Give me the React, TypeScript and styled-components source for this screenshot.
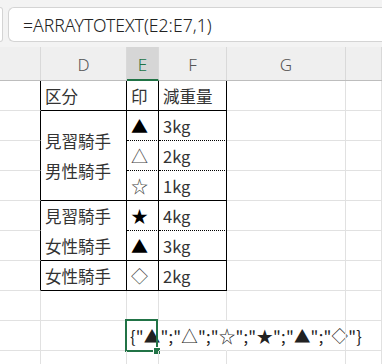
import React from 'react';
import styled, { createGlobalStyle } from 'styled-components';

const GlobalStyle = createGlobalStyle`
  html, body {
    margin: 0;
    padding: 0;
    background: #fff;
  }
  body {
    width: 382px;
    height: 364px;
    overflow: hidden;
    font-family: 'Noto Sans CJK JP', 'Noto Sans', sans-serif;
  }
`;

type Line = 'grid' | 'solid' | 'dotted' | 'none';

const line = (l: Line) =>
	l === 'solid'
		? '1px solid #000'
		: l === 'dotted'
		? '1px dotted #000'
		: l === 'none'
		? '1px solid transparent'
		: '1px solid #e1e1e1';

const COLS = '41px 86px 32px 68px 119px 1fr';

const FormulaBar = styled.div`
	height: 47px;
	box-sizing: border-box;
	background: #f3f3f3;
	padding: 7px 0 5px 0;
	display: flex;
	align-items: stretch;
	gap: 5px;
`;

const NameStub = styled.div`
	width: 2px;
	border: 1px solid #d4d4d4;
	border-left: none;
	border-radius: 0 6px 6px 0;
	background: #fff;
`;

const FormulaBox = styled.div`
	flex: 1;
	background: #fff;
	border: 1px solid #d4d4d4;
	border-right: none;
	border-radius: 6px 0 0 6px;
	display: flex;
	align-items: center;
	padding-left: 14px;
	font-family: 'Noto Sans', 'Liberation Sans', sans-serif;
	font-size: 17.6px;
	font-weight: 300;
	color: #222;
`;

const HeaderRow = styled.div`
	display: grid;
	grid-template-columns: ${COLS};
	height: 34px;
	box-sizing: border-box;
	background: #efefef;
	border-bottom: 1px solid #bdbdbd;
`;

const ColHead = styled.div<{ $active?: boolean }>`
	display: flex;
	align-items: center;
	justify-content: center;
	box-sizing: border-box;
	border-right: 1px solid #d9d9d9;
	font-family: 'Noto Sans', 'Liberation Sans', sans-serif;
	font-size: 17px;
	font-weight: 300;
	color: ${p => (p.$active ? '#217346' : '#555')};
	background: ${p => (p.$active ? '#d6d6d6' : 'transparent')};
	border-bottom: ${p => (p.$active ? '2px solid #217346' : 'none')};
	margin-bottom: ${p => (p.$active ? '-1px' : '0')};
	padding-top: 2px;
`;

const Sheet = styled.div`
	display: grid;
	grid-template-columns: ${COLS};
	grid-auto-rows: 30px;
`;

const Cell = styled.div<{ $r?: Line; $b?: Line; $span?: number }>`
	position: relative;
	box-sizing: border-box;
	border-right: ${p => line(p.$r ?? 'grid')};
	border-bottom: ${p => line(p.$b ?? 'grid')};
	grid-row: ${p => (p.$span ? `span ${p.$span}` : 'auto')};
	display: flex;
	flex-direction: column;
	justify-content: center;
	padding: 1px 0 0 4px;
	font-size: 16.5px;
	line-height: 30px;
	color: #333;
	white-space: nowrap;
`;

const Mark = styled.span<{ $solid?: boolean }>`
	font-size: 17px;
	color: ${p => (p.$solid ? '#000' : '#444')};
`;

const Overflow = styled.span`
	font-size: 16.5px;
	color: #222;
	letter-spacing: 0.2px;
	margin-left: -1px;
`;

const Selection = styled.div`
	position: absolute;
	left: -2px;
	top: -2px;
	width: 33px;
	height: 33px;
	border: 2px solid #217346;
	box-sizing: border-box;
	pointer-events: none;
`;

const FillHandle = styled.div`
	position: absolute;
	right: -5px;
	bottom: -5px;
	width: 6px;
	height: 6px;
	background: #217346;
	border: 1px solid #fff;
`;

type Row = { e: string; solid?: boolean; f: string; b: Line };

const group1: Row[] = [
	{ e: '▲', solid: true, f: '3kg', b: 'dotted' },
	{ e: '△', f: '2kg', b: 'dotted' },
	{ e: '☆', f: '1kg', b: 'solid' },
];

const group2: Row[] = [
	{ e: '★', solid: true, f: '4kg', b: 'dotted' },
	{ e: '▲', solid: true, f: '3kg', b: 'solid' },
];

function Blank() {
	return (
		<>
			<Cell />
			<Cell />
		</>
	);
}

function GroupRows({ rows, label }: { rows: Row[]; label: string[] }) {
	return (
		<>
			{rows.map((r, i) => (
				<React.Fragment key={i}>
					<Cell $r='solid' />
					{i === 0 && (
						<Cell $r='solid' $b='solid' $span={rows.length}>
							{label.map(l => (
								<div key={l}>{l}</div>
							))}
						</Cell>
					)}
					<Cell $r='solid' $b={r.b}>
						<Mark $solid={r.solid}>{r.e}</Mark>
					</Cell>
					<Cell $r='solid' $b={r.b}>
						{r.f}
					</Cell>
					<Blank />
				</React.Fragment>
			))}
		</>
	);
}

export default function App() {
	return (
		<>
			<GlobalStyle />
			<FormulaBar>
				<NameStub />
				<FormulaBox>=ARRAYTOTEXT(E2:E7,1)</FormulaBox>
			</FormulaBar>
			<HeaderRow>
				<ColHead />
				<ColHead>D</ColHead>
				<ColHead $active>E</ColHead>
				<ColHead>F</ColHead>
				<ColHead>G</ColHead>
				<ColHead />
			</HeaderRow>
			<Sheet>
				<Cell $r='solid' />
				<Cell $r='solid' $b='solid'>区分</Cell>
				<Cell $r='solid' $b='solid'>印</Cell>
				<Cell $r='solid' $b='solid'>減重量</Cell>
				<Blank />

				<GroupRows rows={group1} label={['見習騎手', '男性騎手']} />
				<GroupRows rows={group2} label={['見習騎手', '女性騎手']} />

				<Cell $r='solid' />
				<Cell $r='solid' $b='solid'>女性騎手</Cell>
				<Cell $r='solid' $b='solid'>
					<Mark>◇</Mark>
				</Cell>
				<Cell $r='solid' $b='solid'>2kg</Cell>
				<Blank />

				<Cell />
				<Cell />
				<Cell />
				<Cell />
				<Blank />

				<Cell />
				<Cell />
				<Cell $r='none'>
					<Overflow>{'{"▲";"△";"☆";"★";"▲";"◇"}'}</Overflow>
					<Selection>
						<FillHandle />
					</Selection>
				</Cell>
				<Cell $r='none' />
				<Blank />

				<Cell />
				<Cell />
				<Cell />
				<Cell />
				<Blank />
			</Sheet>
		</>
	);
}
